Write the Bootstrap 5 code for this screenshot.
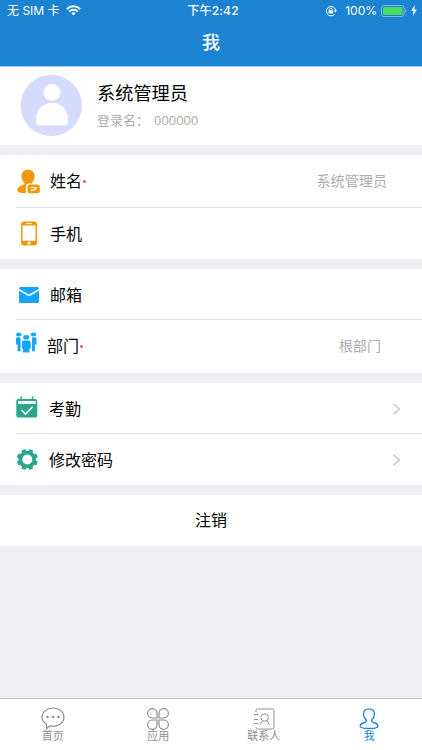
<!DOCTYPE html>
<html lang="zh-CN">
<head>
<meta charset="utf-8">
<meta name="viewport" content="width=device-width, initial-scale=1">
<title>我</title>
<link href="https://cdn.jsdelivr.net/npm/bootstrap@5.3.0/dist/css/bootstrap.min.css" rel="stylesheet">
<style>
body{font-family:"Liberation Sans","Noto Sans CJK SC",sans-serif;background:#eeeef3;color:#000;font-size:16px;line-height:1.2}
svg{display:block;flex:none}
.app{height:750px;overflow:hidden}
.topbar{height:67px;background:#1c82d2;border-bottom:1px solid #a4cbed;color:#fff}
.status{height:22px;font-size:12px;padding:0 5px 0 7px;display:grid;grid-template-columns:1fr auto 1fr}
.status-text{font-family:Inter,"Noto Sans CJK SC",sans-serif}
.wifi{margin-left:6px}
.clock{font-weight:500;letter-spacing:.2px;padding-left:2px}
.title{height:44px;font-size:18px;font-weight:500}
.profile{height:78px;padding-left:20px}
.who{margin-left:15px}
.who-name{font-size:18.2px;line-height:24px}
.who-login{font-size:13px;line-height:20px;color:#acacac;margin-top:5px}
.who-id{margin-left:5px;font-family:"Liberation Sans",sans-serif;font-size:13px;letter-spacing:.15px}
.group{margin-top:10px}
.item{height:51px;padding-left:16px}
.item.tall{height:53px}
.item.line{position:relative}
.item.line::after{content:"";position:absolute;left:16px;right:0;bottom:0;border-bottom:1px solid #dfdfe3}
.ico{width:34px;flex:none}
.ico.w31{width:31px}.ico.w33{width:33px}
.low{padding-top:2px}
.dot{width:3px;height:3px;border-radius:50%;background:#f4506a;margin-left:1px}
.value{font-size:14.1px;color:#acacac;margin-right:35px}
.value.dept{margin-right:41px}
.chev{margin-right:21px}
.tabs{height:52px;border-top:1px solid #c4c4c6;color:#8e8e8e;font-size:11px}
.tab{padding-top:8px;line-height:13px}
.tab.on{color:#1c86d6}
</style>
<script src="https://cdn.jsdelivr.net/npm/bootstrap@5.3.0/dist/js/bootstrap.bundle.min.js"></script>
</head>
<body>
<div class="app d-flex flex-column">
<header class="topbar flex-shrink-0">
  <div class="status align-items-center">
    <div class="d-flex align-items-center"><span class="status-text">无 SIM 卡</span>
      <svg class="wifi" width="15" height="11" viewBox="0 0 15 11" fill="none" stroke="#fff" stroke-width="2"><path d="M.9 4.1a9.3 9.3 0 0 1 13.2 0M3.2 6.600a6.100 6.100 0 0 1 8.600 0"/><path d="M7.500 10.500 5.300 8.300a3.100 3.100 0 0 1 4.400 0z" fill="#fff" stroke="none"/></svg>
    </div>
    <span class="status-text clock">下午2:42</span>
    <div class="d-flex align-items-center justify-content-end">
      <svg width="12" height="12" viewBox="0 0 12 12" fill="none" stroke="#fff"><path d="M9.400 9.400A4.700 4.700 0 1 1 10.600 5"/><path d="M8.800 5.200h3.200l-1.600 2.200z" fill="#fff" stroke="none"/><path d="M3.500 5.400h4.600v3H3.500z" fill="#fff" stroke="none"/><path d="M4.500 5.500V4.400a1.300 1.300 0 0 1 2.600 0v1.100" stroke-width=".9"/></svg>
      <span class="status-text ms-1 ps-1">100%</span>
      <svg class="ms-1" width="26" height="12" viewBox="0 0 26 12"><rect x=".5" y=".5" width="22.500" height="11" rx="2.500" fill="none" stroke="#80b8e6"/><rect x="2" y="2" width="19.500" height="8" rx="1.200" fill="#4cd964"/><path d="M24.300 4v4c1.600-.6 1.600-3.400 0-4z" fill="#80b8e6"/></svg>
      <svg class="ms-1" width="6" height="11" viewBox="0 0 6 11"><path d="M4 0 0 6h2.600L1.700 11 6 4.600H3.300z" fill="#fff"/></svg>
    </div>
  </div>
  <div class="title d-flex align-items-center justify-content-center">我</div>
</header>
<main class="flex-grow-1">
  <section class="profile bg-white d-flex align-items-center">
    <svg width="62" height="62" viewBox="0 0 62 62"><circle cx="31.300" cy="30.500" r="30.700" fill="#d5dbfb"/><circle cx="32" cy="17.500" r="8.500" fill="#fff"/><path d="M16 44C16 34.500 23 27.700 32 27.700S48 34.500 48 44v3q0 3.300-3 3.300H19q-3 0-3-3.300z" fill="#fff"/></svg>
    <div class="who"><div class="who-name">系统管理员</div><div class="who-login">登录名：<span class="who-id">000000</span></div></div>
  </section>
  <section class="group bg-white">
    <div class="item tall line d-flex align-items-center">
      <span class="ico"><svg width="25" height="26" viewBox="0 0 25 26"><g fill="#f39708"><path d="M5.500 7.500C5.500 3 7.900.7 12 .7s6.600 2.300 6.600 6.800c0 2.700-1 4.600-2.600 6.200v.8h-3.500q-2.600 0-2.600 2.600V24H6c-3 0-4.700-1-4.700-3 0-3 3.200-4.600 6.800-5.600.8-.2.800-1 .2-1.600-1.800-1.700-2.800-3.500-2.800-6.300z"/><rect x="11.600" y="15.500" width="12.200" height="8.800" rx="2"/></g><path d="M14.500 18.500h6.200M14.500 21.200h3.800l2.400-2.700" stroke="#fff" stroke-width="1.200" fill="none"/></svg></span>
      <span>姓名</span><i class="dot"></i><span class="value ms-auto">系统管理员</span>
    </div>
    <div class="item d-flex align-items-center">
      <span class="ico"><svg width="25" height="26" viewBox="0 0 25 26"><rect x="5" y=".5" width="16" height="24" rx="3" fill="#f39708"/><path d="M6.500 4.500h13v15.300h-13z" fill="#fff"/><path d="M10.500 2.600h5" stroke="#fff" stroke-linecap="round"/><circle cx="13" cy="22.200" r="1.400" fill="#fff"/></svg></span><span class="low">手机</span>
    </div>
  </section>
  <section class="group bg-white">
    <div class="item line d-flex align-items-center">
      <span class="ico"><svg width="25" height="18" viewBox="0 0 25 18"><rect x="3" y="1" width="20" height="16" rx="1.500" fill="#15a5fb"/><path d="m2.500 3.500 8.700 5q1.800 1 3.600 0l8.700-5" fill="none" stroke="#fff" stroke-width="1.600"/></svg></span><span class="low">邮箱</span>
    </div>
    <div class="item tall d-flex align-items-center">
      <span class="ico w31"><svg class="mb-2" width="21" height="22" viewBox="0 0 21 22" fill="#15a5fb"><ellipse cx="2.700" cy="2.500" rx="2.700" ry="2"/><ellipse cx="17.500" cy="2.500" rx="2.700" ry="2"/><ellipse cx="10.200" cy="5.300" rx="3" ry="2.300"/><path d="M0 6.500q0-1.200 1.200-1.200h2.200q1.200 0 1.200 1.200V19.200H1.600V12.500H0zM20.500 6.500q0-1.200-1.200-1.200h-2.200q-1.200 0-1.200 1.200v12.700h3V12.500h1.600zM5.800 10.500q0-2.100 2.200-2.100h4.500q2.200 0 2.200 2.100V16.500h-1.200v4H7v-4H5.800z"/></svg></span>
      <span>部门</span><i class="dot"></i><span class="value dept ms-auto">根部门</span>
    </div>
  </section>
  <section class="group bg-white">
    <div class="item line d-flex align-items-center">
      <span class="ico w33"><svg class="mb-1" width="22" height="22" viewBox="0 0 22 22"><rect x=".3" y="3" width="21" height="18.500" rx="2" fill="#2ca58d"/><path d="M5 .5v4M16.500.5v4" stroke="#2ca58d" stroke-width="1.500"/><path d="M2 5h17.700v3H2z" fill="#fff"/><path d="m5.500 14 4 4 7-7" fill="none" stroke="#fff" stroke-width="1.600"/></svg></span><span class="low">考勤</span>
      <svg class="chev ms-auto" width="9" height="12" viewBox="0 0 9 12" fill="none" stroke="#c0c0c4" stroke-width="1.200"><path d="m1.500.7 6 5.300-6 5.300"/></svg>
    </div>
    <div class="item d-flex align-items-center">
      <span class="ico w33"><svg width="22" height="22" viewBox="-11.300 -10.500 22 22"><g stroke="#2ca58d" stroke-width="4.200"><g transform="rotate(22.500)"><path d="M0-10.500v4M0 10.500v-4M-10.500 0h4M10.500 0h-4"/><path transform="rotate(45)" d="M0-10.500v4M0 10.500v-4M-10.500 0h4M10.500 0h-4"/></g></g><circle r="6.900" fill="#fff" stroke="#2ca58d" stroke-width="3.800"/></svg></span><span class="low">修改密码</span>
      <svg class="chev ms-auto" width="9" height="12" viewBox="0 0 9 12" fill="none" stroke="#c0c0c4" stroke-width="1.200"><path d="m1.500.7 6 5.300-6 5.300"/></svg>
    </div>
  </section>
  <section class="group bg-white"><div class="item ps-0 d-flex align-items-center justify-content-center">注销</div></section>
</main>
<nav class="tabs bg-white row g-0 flex-shrink-0">
  <div class="tab col-3 d-flex flex-column align-items-center"><svg width="24" height="23" viewBox="0 0 24 23" fill="none" stroke="currentColor" stroke-width="1.200"><path d="M5.500 21.700v-4.500C2.700 15.500 1 13.200 1 10.300 1 5 5.800 1 12 1s11 4 11 9.300-4.800 9-11 9c-1.300 0-2.300-.2-3.300-.4z"/><g fill="currentColor" stroke="none"><circle cx="6.500" cy="10" r="1.300"/><circle cx="12" cy="10" r="1.300"/><circle cx="17.500" cy="10" r="1.300"/></g></svg><span>首页</span></div>
  <div class="tab col-3 d-flex flex-column align-items-center"><svg width="24" height="23" viewBox="0 0 24 23" fill="none" stroke="currentColor" stroke-width="1.200"><path d="M11 11H6a4.700 4.700 0 1 1 5-4.700zM13 11h5a4.700 4.700 0 1 0-5-4.700zM11 13H6a4.700 4.700 0 1 0 5 4.700zM13 13h5a4.700 4.700 0 1 1-5 4.700z"/></svg><span>应用</span></div>
  <div class="tab col-3 d-flex flex-column align-items-center"><svg width="24" height="23" viewBox="0 0 24 23" fill="none" stroke="currentColor"><path d="M4 5V3.500Q4 2 5.500 2h15Q22 2 22 3.500v17q0 1.500-1.500 1.500h-15Q4 22 4 20.500V20M2 7.500h4M2 12.500h4M2 16.500h4"/><circle cx="12.700" cy="10.500" r="3.700"/><path d="M8.500 17.500q0-2.800 2.500-3.800M17 17.500q0-2.800-2.500-3.800"/></svg><span>联系人</span></div>
  <div class="tab on col-3 d-flex flex-column align-items-center"><svg width="24" height="23" viewBox="0 0 24 23" fill="none" stroke="currentColor" stroke-width="1.300"><path d="M9.500 13.300C7.500 11.500 6.500 9.500 6.500 7.200c0-3.500 2-5.400 5.500-5.400s5.500 1.900 5.500 5.400c0 2.300-1 4.300-3 6.100 0 1.700 1 2.200 3.200 2.700 2 .5 3.100 1.500 3.100 2.900 0 1.800-3.500 2.600-8.800 2.600s-8.800-.8-8.800-2.600c0-1.400 1.100-2.400 3.100-2.900 2.200-.5 3.200-1 3.200-2.700z"/></svg><span>我</span></div>
</nav>
</div>
</body>
</html>
